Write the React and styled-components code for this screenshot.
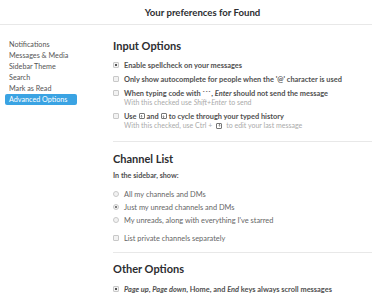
import styled, { createGlobalStyle } from "styled-components";

const GlobalStyle = createGlobalStyle`
  body {
    margin: 0;
    font-family: Lato, "Open Sans", sans-serif;
    background: #fff;
    overflow: hidden;
  }
`

const Page = styled.div`
  width: 372px;
  height: 300px;
  overflow: hidden;
`

const Header = styled.header`
  height: 24px;
  border-bottom: 1px solid #e8e8e8;
  display: flex;
  align-items: center;
  justify-content: center;
  padding-left: 33px;
  h1 {
    margin: 0;
    font-size: 9.6px;
    font-weight: 700;
    color: #2c2d30;
  }
`

const Body = styled.div`
  display: flex;
`

const Sidebar = styled.nav`
  width: 108px;
  padding: 14px 0 0 5px;
  display: flex;
  flex-direction: column;
  align-items: flex-start;
`

const NavItem = styled.div`
  width: 72px;
  box-sizing: border-box;
  height: 11px;
  line-height: 11px;
  padding-left: 4px;
  font-size: 7.2px;
  border-radius: 2px;
  color: ${(p) => (p.$active ? "#fff" : "#555")};
  background: ${(p) => (p.$active ? "#3aa3e3" : "transparent")};
`

const Content = styled.main`
  flex: 1;
`

const Section = styled.section`
  padding: ${(p) => p.$top || 10}px 0 ${(p) => p.$bottom || 10}px;
  border-bottom: ${(p) => (p.$last ? "none" : "1px solid #e8e8e8")};
  h2 {
    margin: 0 0 ${(p) => p.$headGap || 7}px;
    font-size: 11px;
    line-height: 14px;
    font-weight: 700;
    color: #2c2d30;
  }
`

const Options = styled.div`
  display: flex;
  flex-direction: column;
  gap: ${(p) => p.$gap || 4}px;
  margin-top: ${(p) => p.$top || 0}px;
`

const Option = styled.div`
  display: flex;
  flex-direction: column;
`

const Label = styled.div`
  display: flex;
  align-items: center;
  height: 10px;
  font-size: 7.4px;
  font-weight: ${(p) => (p.$plain ? 400 : 700)};
  color: ${(p) => (p.$plain ? "#666" : "#505050")};
  white-space: nowrap;
  em {
    font-style: italic;
  }
`

const Prompt = styled.div`
  height: 10px;
  line-height: 10px;
  font-size: 7.2px;
  font-weight: 700;
  color: #505050;
  margin-bottom: 8px;
`

const Hint = styled.div`
  height: 9px;
  line-height: 9px;
  padding-left: 11px;
  font-size: 7px;
  color: #aaa;
  white-space: nowrap;
  display: flex;
  align-items: center;
  gap: 2px;
`

const Box = styled.span`
  width: 4px;
  height: 4px;
  margin-right: 5px;
  border: 1px solid #c8c8c8;
  background: #f2f2f2;
  border-radius: ${(p) => (p.$round ? "50%" : "1px")};
  display: flex;
  align-items: center;
  justify-content: center;
  flex-shrink: 0;
  &::after {
    content: "";
    display: ${(p) => (p.$on ? "block" : "none")};
    width: ${(p) => (p.$round ? "2px" : "2.5px")};
    height: ${(p) => (p.$round ? "2px" : "2.5px")};
    border-radius: ${(p) => (p.$round ? "50%" : "0")};
    background: #555;
  }
`

const Key = styled.span`
  display: inline-flex;
  align-items: center;
  justify-content: center;
  width: 4px;
  height: 4px;
  border: 1px solid #777;
  border-radius: 1px;
  margin: 0 2px;
  svg {
    width: 3px;
    height: 3px;
  }
`

const Arrow = ({ down }) => (
  <Key>
    <svg viewBox="0 0 4 4">
      <path
        d={down ? "M2 0.5v3M0.8 2.2L2 3.4l1.2-1.2" : "M2 3.5v-3M0.8 1.8L2 0.6l1.2 1.2"}
        stroke="#555"
        strokeWidth="0.8"
        fill="none"
      />
    </svg>
  </Key>
)

const Check = ({ on, round, plain, children }) => (
  <Label $plain={plain}>
    <Box $on={on} $round={round} />
    <span>{children}</span>
  </Label>
)

const nav = [
  "Notifications",
  "Messages & Media",
  "Sidebar Theme",
  "Search",
  "Mark as Read",
  "Advanced Options",
]

export default function App() {
  return (
    <Page>
      <GlobalStyle />
      <Header>
        <h1>Your preferences for Found</h1>
      </Header>
      <Body>
        <Sidebar>
          {nav.map((item) => (
            <NavItem key={item} $active={item === "Advanced Options"}>
              {item}
            </NavItem>
          ))}
        </Sidebar>
        <Content>
          <Section $top={14} $bottom={11} $headGap={7}>
            <h2>Input Options</h2>
            <Options>
              <Option>
                <Check on>Enable spellcheck on your messages</Check>
              </Option>
              <Option>
                <Check>Only show autocomplete for people when the '@' character is used</Check>
              </Option>
              <Option>
                <Check>
                  When typing code with ```, <em>Enter</em> should not send the message
                </Check>
                <Hint>
                  With this checked use <em>Shift+Enter</em> to send
                </Hint>
              </Option>
              <Option>
                <Label>
                  <Box />
                  <span>Use</span>
                  <Arrow />
                  <span>and</span>
                  <Arrow down />
                  <span>to cycle through your typed history</span>
                </Label>
                <Hint>
                  With this checked, use Ctrl + <Arrow /> to edit your last message
                </Hint>
              </Option>
            </Options>
          </Section>
          <Section $top={10} $bottom={9} $headGap={5}>
            <h2>Channel List</h2>
            <Prompt>In the sidebar, show:</Prompt>
            <Options $gap={3}>
              <Check round plain>All my channels and DMs</Check>
              <Check round on plain>Just my unread channels and DMs</Check>
              <Check round plain>My unreads, along with everything I've starred</Check>
            </Options>
            <Options $top={8}>
              <Check plain>List private channels separately</Check>
            </Options>
          </Section>
          <Section $top={9} $last $headGap={8}>
            <h2>Other Options</h2>
            <Options>
              <Check on>
                <em>Page up</em>, <em>Page down</em>, Home, and <em>End</em> keys always scroll messages
              </Check>
              <Check>
                <em>Ctrl+Enter</em> to start a new line, <em>Shift+Enter</em> to send
              </Check>
            </Options>
          </Section>
        </Content>
      </Body>
    </Page>
  )
}
